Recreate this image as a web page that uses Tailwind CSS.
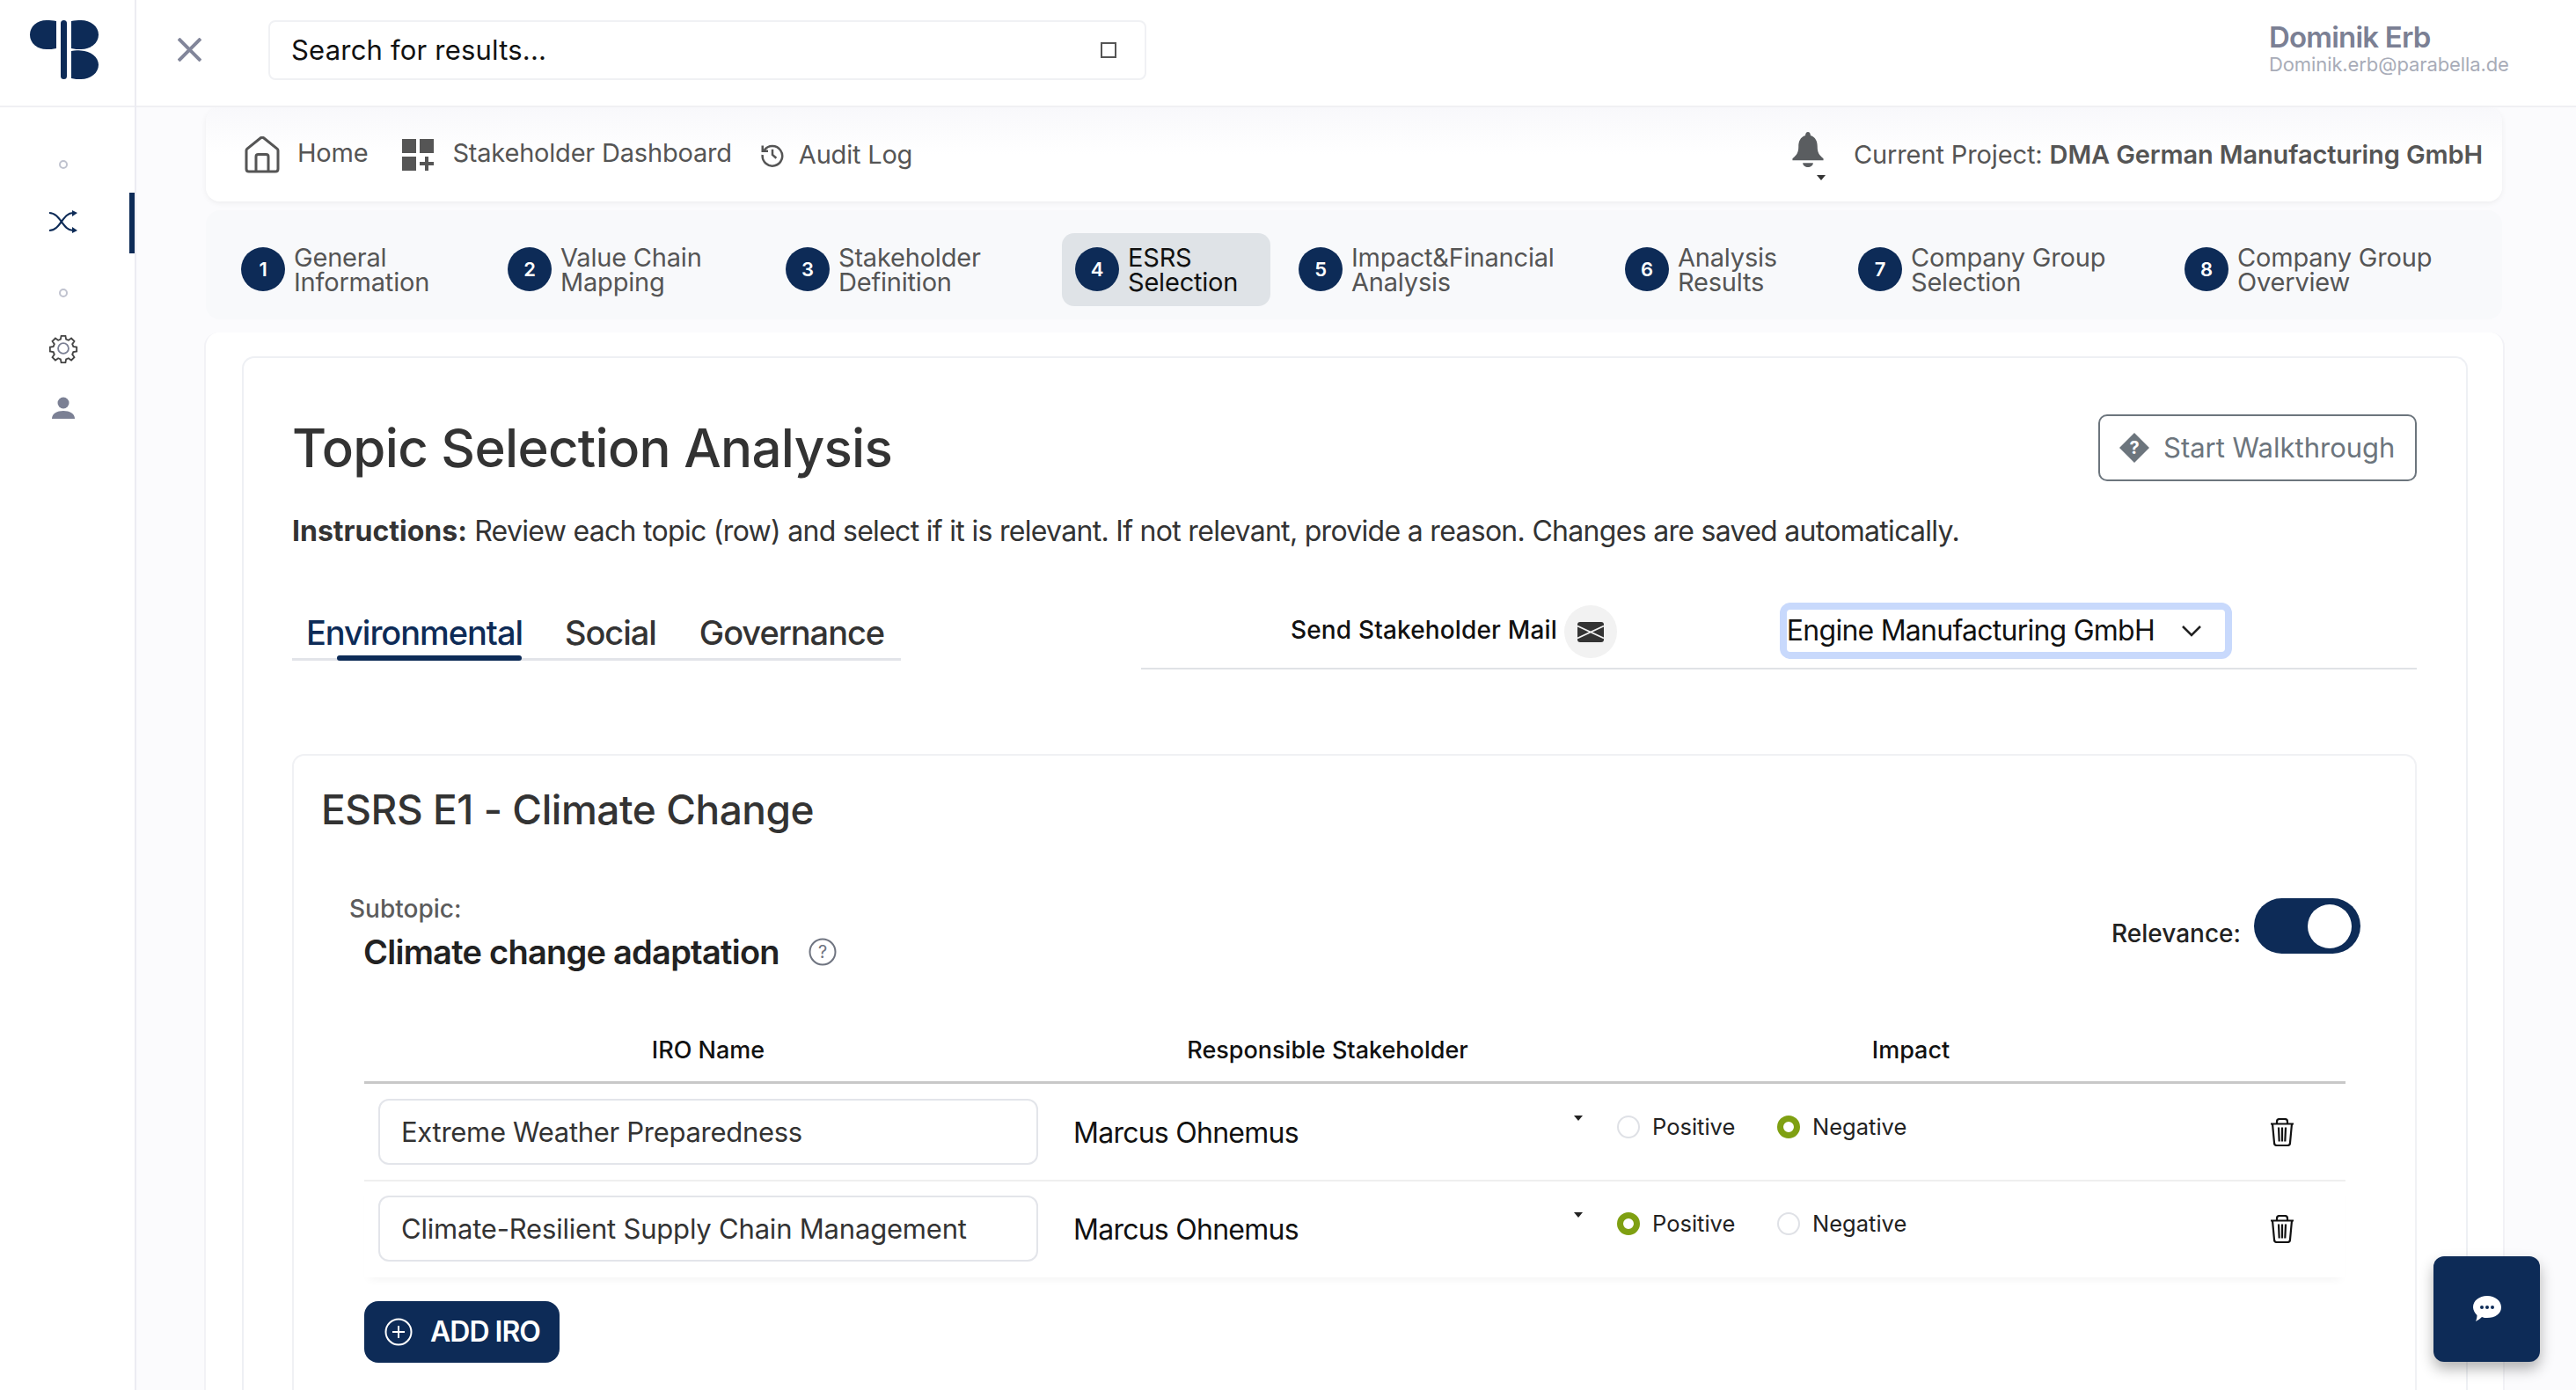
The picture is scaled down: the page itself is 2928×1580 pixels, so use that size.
<!DOCTYPE html>
<html lang="en">
<head>
    <meta charset="UTF-8">
    <title>Topic Selection Analysis</title>
    <script src="https://cdn.jsdelivr.net/npm/@tailwindcss/browser@4"></script>
</head>
<body class="font-['Inter',sans-serif] h-[1580px] overflow-hidden flex bg-[#fbfbfd] text-[#333]">
    <!-- Sidebar -->
    <aside class="w-[155px] shrink-0 h-full bg-white border-r-2 border-[#ececf2] flex flex-col items-center pr-[10px]">
        <div class="w-[153px] -mr-[10px] self-start h-[122px] border-b-2 border-[#f0f0f3] pt-[23px] pl-[33px]">
            <svg width="80" height="68" viewBox="0 0 80 68" fill="#0d2b57">
                <path d="M31 1C27 0 24 0 20 0C9 0 1 7 1 16.500C1 26 9 33 20 33C24 33 27 33 31 32Z"/>
                <rect x="36" y="0" width="7" height="67" rx="3.500"/>
                <path d="M48 1C52 0 55 0 59 0C70 0 79 7 79 16.500C79 26 70 33 59 33C55 33 52 33 48 32Z"/>
                <path d="M48 35C52 34 55 34 59 34.500C70 35 79 42 79 50.500C79 60 70 67 59 67C55 67 52 67 48 66Z"/>
            </svg>
        </div>
        <div class="mt-[60px] w-[10px] h-[10px] rounded-full border-2 border-[#c0c3cf]"></div>
        <div class="relative w-full flex justify-center mt-[42px] h-[36px] items-center">
            <svg width="34" height="26" viewBox="0 0 34 26" fill="none" stroke="#0d2b57" stroke-width="2.200">
                <path d="M1 3C14 3 16 23 28 23M1 23C14 23 16 3 28 3"/>
                <path d="M27 0L33 3L27 7Z M27 19L33 23L27 26Z" fill="#0d2b57" stroke="none"/>
            </svg>
            <div class="absolute right-[-10px] top-[-15px] w-[6px] h-[69px] bg-[#0d2b57]"></div>
        </div>
        <div class="mt-[58px] w-[10px] h-[10px] rounded-full border-2 border-[#c0c3cf]"></div>
        <svg class="mt-[41px]" width="34" height="34" viewBox="0 0 24 24" fill="none" stroke="#444" stroke-width="1.300">
            <path d="M10.300 2h3.400l.5 2.700 1.900.8 2.300-1.600 2.400 2.400-1.600 2.300.8 1.900 2.700.5v3.400l-2.700.5-.8 1.900 1.600 2.300-2.400 2.400-2.300-1.600-1.900.8-.5 2.700h-3.400l-.5-2.700-1.900-.8-2.300 1.600-2.400-2.400 1.600-2.300-.8-1.900-2.700-.5v-3.400l2.700-.5.8-1.900-1.600-2.300 2.400-2.400 2.300 1.600 1.900-.8z"/>
            <circle cx="12" cy="12" r="4.200" stroke="#7b8094"/>
        </svg>
        <svg class="mt-[38px]" width="26" height="26" viewBox="0 0 26 26" fill="#7b8094">
            <circle cx="13" cy="7" r="6.500"/>
            <path d="M0 25C0 19 6 16 13 16S26 19 26 25Z"/>
        </svg>
    </aside>

    <div class="flex-1 min-w-0 flex flex-col">
        <!-- Top bar -->
        <header class="h-[122px] shrink-0 bg-white border-b-2 border-[#f0f0f3] flex items-start pt-[23px]">
            <svg class="ml-[47px] mt-[20px]" width="27" height="27" viewBox="0 0 27 27" fill="none" stroke="#82869a" stroke-width="4">
                <path d="M1 1L26 26M26 1L1 26"/>
            </svg>
            <div class="ml-[76px] w-[998px] h-[68px] rounded-[8px] border-2 border-[#f0f1f4] flex items-center justify-between pl-[24px] pr-[32px]">
                <span class="text-[31px] text-[#111] tracking-[0.2px]">Search for results...</span>
                <div class="w-[18px] h-[18px] border-2 border-[#555]"></div>
            </div>
            <div class="ml-auto mr-[75px] mt-[1px] w-[274px]">
                <div class="text-[33px] leading-[36px] font-semibold text-[#7b8094] tracking-[-0.8px]">Dominik Erb</div>
                <div class="text-[22px] leading-[26px] text-[#a8acb8] tracking-[-0.1px] whitespace-nowrap">Dominik.erb@parabella.de</div>
            </div>
        </header>

        <main class="flex-1 min-h-0 pl-[79px] flex flex-col overflow-hidden">
            <!-- Nav -->
            <nav class="w-[2610px] h-[107px] shrink-0 bg-linear-to-b from-[#f8f8fb] via-white to-white rounded-[16px] shadow-[0_2px_6px_rgba(0,0,0,0.06)] flex items-center pl-[44px] pr-[22px] text-[29px] text-[#555] tracking-[-0.2px]">
                <svg width="40" height="42" viewBox="0 0 40 42" fill="none" stroke="#555" stroke-width="3">
                    <path d="M2 16Q2 15 3 14L18 2Q20 .5 22 2L37 14Q38 15 38 16V37Q38 40 35 40H5Q2 40 2 37Z"/>
                    <path d="M13 40V23Q13 20.500 15.500 20.500H24.500Q27 20.500 27 23V40"/>
                </svg>
                <span class="ml-[20px] mb-[4px]">Home</span>
                <svg class="ml-[39px]" width="36" height="36" viewBox="0 0 36 36" fill="#555">
                    <rect x="0" y="0" width="16" height="16"/>
                    <rect x="20" y="0" width="16" height="16"/>
                    <rect x="0" y="20" width="16" height="16"/>
                    <path d="M26 20H30V26H36V30H30V36H26V30H20V26H26Z"/>
                </svg>
                <span class="ml-[21px] mb-[4px]">Stakeholder Dashboard</span>
                <svg class="ml-[31px]" width="30" height="30" viewBox="0 0 24 24" fill="none" stroke="#555" stroke-width="2">
                    <path d="M4.500 8A9 9 0 1 1 3 12"/>
                    <path d="M3 3.500V8.500H8" />
                    <path d="M12 7V12L15.500 15"/>
                </svg>
                <span class="ml-[15px]">Audit Log</span>
                <div class="ml-auto relative mr-[34px] mb-[10px]">
                    <svg width="36" height="41" viewBox="0 0 36 42" fill="#5a5d60">
                        <path d="M18 0C20 0 21 2 21 4C27 6 29 11 29 17C29 24 31 27 36 31V33H0V31C5 27 7 24 7 17C7 11 9 6 15 4C15 2 16 0 18 0Z"/>
                        <path d="M12 36H24C24 39 21 41 18 41C15 41 12 39 12 36Z"/>
                    </svg>
                    <div class="absolute left-[28px] top-[49px] w-0 h-0 border-x-[5px] border-x-transparent border-t-[6px] border-t-[#333]"></div>
                </div>
                <span class="tracking-[-0.12px]">Current Project: <b class="font-semibold">DMA German Manufacturing GmbH</b></span>
            </nav>

            <!-- Stepper -->
            <div class="w-[2610px] h-[124px] shrink-0 mt-[10px] bg-[#f8f9fb] rounded-[16px] grid grid-cols-[303px_316px_329px_254px_371px_265px_371px_1fr] items-center pl-[40px] pt-[10px] text-[29px] leading-[28px] text-[#555] tracking-[-0.2px]">
                <div class="flex items-center gap-[10px]"><span class="w-[50px] h-[50px] rounded-full bg-[#0d2b57] text-white text-[22px] font-semibold flex items-center justify-center">1</span><span class="mt-[2px]">General<br>Information</span></div>
                <div class="flex items-center gap-[10px]"><span class="w-[50px] h-[50px] rounded-full bg-[#0d2b57] text-white text-[22px] font-semibold flex items-center justify-center">2</span><span class="mt-[2px]">Value Chain<br>Mapping</span></div>
                <div class="flex items-center gap-[10px]"><span class="w-[50px] h-[50px] rounded-full bg-[#0d2b57] text-white text-[22px] font-semibold flex items-center justify-center">3</span><span class="mt-[2px]">Stakeholder<br>Definition</span></div>
                <div class="flex items-center gap-[10px] -ml-[15px] w-[237px] h-[83px] pl-[15px] rounded-[14px] bg-[#dfe3e7] text-[#111]"><span class="w-[50px] h-[50px] rounded-full bg-[#0d2b57] text-white text-[22px] font-semibold flex items-center justify-center">4</span><span class="mt-[2px]">ESRS<br>Selection</span></div>
                <div class="flex items-center gap-[10px]"><span class="w-[50px] h-[50px] rounded-full bg-[#0d2b57] text-white text-[22px] font-semibold flex items-center justify-center">5</span><span class="mt-[2px]">Impact&amp;Financial<br>Analysis</span></div>
                <div class="flex items-center gap-[10px]"><span class="w-[50px] h-[50px] rounded-full bg-[#0d2b57] text-white text-[22px] font-semibold flex items-center justify-center">6</span><span class="mt-[2px]">Analysis<br>Results</span></div>
                <div class="flex items-center gap-[10px]"><span class="w-[50px] h-[50px] rounded-full bg-[#0d2b57] text-white text-[22px] font-semibold flex items-center justify-center">7</span><span class="mt-[2px]">Company Group<br>Selection</span></div>
                <div class="flex items-center gap-[10px]"><span class="w-[50px] h-[50px] rounded-full bg-[#0d2b57] text-white text-[22px] font-semibold flex items-center justify-center">8</span><span class="mt-[2px]">Company Group<br>Overview</span></div>
            </div>

            <!-- Outer card -->
            <div class="-ml-[2px] w-[2615px] flex-1 min-h-0 mt-[15px] border-x-2 border-[#f2f2f6] bg-white rounded-t-[16px] pt-[27px] pl-[41px] pr-[40px] flex flex-col">
                <section class="flex-1 min-h-0 border-2 border-b-0 border-[#eef0f4] rounded-t-[14px] pl-[55px] pr-[56px] pt-[64px] flex flex-col">
                    <div class="flex justify-between items-center">
                        <h1 class="text-[60px] leading-[76px] font-medium text-[#333] tracking-[-0.7px]">Topic Selection Analysis</h1>
                        <button class="w-[362px] h-[76px] border-2 border-[#6c757d] rounded-[10px] flex items-center pl-[22px] gap-[16px] text-[#6c757d] text-[31px]">
                            <svg width="34" height="34" viewBox="0 0 34 34" fill="#6c757d">
                                <path d="M17 0L34 17L17 34L0 17Z"/>
                                <text x="17" y="24" text-anchor="middle" font-size="20" font-weight="700" fill="#fff">?</text>
                            </svg>
                            Start Walkthrough
                        </button>
                    </div>
                    <p class="mt-[37px] text-[32px] leading-[40px] text-[#333] tracking-[-0.7px]"><b class="font-bold tracking-normal">Instructions:</b> Review each topic (row) and select if it is relevant. If not relevant, provide a reason. Changes are saved automatically.</p>

                    <div class="mt-[61px] flex justify-between items-start">
                        <div class="relative w-[692px] h-[66px] border-b-[3px] border-[#e2e4e9] flex pl-[16px] text-[38px] leading-[68px] text-[#333] font-medium tracking-[-1.050px]">
                            <span class="text-[#0d2b57]">Environmental</span>
                            <span class="ml-[48px]">Social</span>
                            <span class="ml-[49px]">Governance</span>
                            <div class="absolute left-[51px] bottom-[-3px] w-[210px] h-[6px] rounded-[3px] bg-[#0d2b57]"></div>
                        </div>
                        <div class="w-[1450px] h-[76px] border-b-2 border-[#e0e2e6] flex items-start pl-[170px]">
                            <span class="text-[28px] leading-[62px] font-medium text-[#111] whitespace-nowrap tracking-[0.15px]">Send Stakeholder Mail</span>
                            <div class="ml-[8px] mt-[3px] w-[60px] h-[60px] rounded-full bg-[#f2f2f2] flex items-center justify-center">
                                <svg width="30" height="23" viewBox="0 0 30 23"><rect width="30" height="23" rx="3" fill="#333"/><path d="M0 4.500L30 18.500M30 4.500L0 18.500" fill="none" stroke="#f2f2f2" stroke-width="1.600"/></svg>
                            </div>
                            <div class="ml-[185px] w-[514px] h-[64px] rounded-[12px] border-[8px] border-[#c8d9fc] flex items-center justify-between pr-[26px] text-[32px] text-[#111] tracking-[-0.75px] whitespace-nowrap">
                                <span>Engine Manufacturing GmbH</span>
                                <svg width="24" height="14" viewBox="0 0 24 14" fill="none" stroke="#222" stroke-width="2.500"><path d="M2 2L12 12L22 2"/></svg>
                            </div>
                        </div>
                    </div>

                    <div class="mt-[96px] flex-1 min-h-0 border-2 border-b-0 border-[#f0f1f4] rounded-t-[14px] pt-[31px] pl-[31px]">
                        <h2 class="text-[46px] leading-[60px] font-medium text-[#333] tracking-[-0.45px]">ESRS E1 - Climate Change</h2>
                        <div class="mt-[65px] ml-[32px] flex justify-between pr-[62px]">
                            <div>
                                <div class="text-[28px] leading-[36px] font-medium text-[#5c5c5c]">Subtopic:</div>
                                <div class="ml-[16px] mt-[7px] flex items-center h-[48px]">
                                    <span class="text-[38px] font-semibold text-[#222] tracking-[-0.75px]">Climate change adaptation</span>
                                    <svg class="ml-[33px]" width="32" height="32" viewBox="0 0 32 32" fill="none" stroke="#6f7480" stroke-width="2"><circle cx="16" cy="16" r="14.500"/><text x="16" y="23" text-anchor="middle" font-size="20" stroke="none" fill="#6f7480">?</text></svg>
                                </div>
                            </div>
                            <div class="flex items-start mt-[6px]">
                                <span class="text-[28px] leading-[40px] mt-[20px] font-medium text-[#222]">Relevance:</span>
                                <div class="ml-[15px] w-[121px] h-[63px] rounded-full bg-[#0d2b57] relative">
                                    <div class="absolute right-[10px] top-[7px] w-[50px] h-[50px] rounded-full bg-white"></div>
                                </div>
                            </div>
                        </div>

                        <!-- IRO table -->
                        <div class="mt-[70px] ml-[49px] w-[2252px]">
                            <div class="grid grid-cols-[782px_626px_700px_144px] h-[56px] border-b-[3px] border-[#c8c8c8] text-[27px] leading-[36px] font-medium text-[#111] text-center">
                                <div>IRO Name</div>
                                <div>Responsible Stakeholder</div>
                                <div>Impact</div>
                                <div></div>
                            </div>
                            <div class="grid grid-cols-[782px_626px_700px_144px] items-start pt-[17px] pb-[17px] border-b-2 border-[#efefef]">
                                <div class="pl-[16px]"><div class="w-[750px] h-[75px] border-2 border-[#e3e5ea] rounded-[12px] flex items-center pl-[24px] pt-[2px] text-[31px] text-[#333] tracking-[-0.3px]">Extreme Weather Preparedness</div></div>
                                <div class="relative pl-[24px] pt-[2px] h-[75px] flex items-center text-[32px] text-[#111] tracking-[-0.75px]">Marcus Ohnemus<div class="absolute left-[593px] top-[19px] w-0 h-0 border-x-[5px] border-x-transparent border-t-[6px] border-t-[#222]"></div></div>
                                <div class="flex items-center h-[64px] pl-[16px] text-[25.500px] text-[#222]">
                                    <span class="w-[26px] h-[26px] rounded-full border-2 border-[#dfe1e6]"></span><span class="ml-[14px] w-[142px]">Positive</span>
                                    <span class="w-[26px] h-[26px] rounded-full border-[7px] border-[#7fa012] bg-white"></span><span class="ml-[14px]">Negative</span>
                                </div>
                                <div class="flex justify-center h-[75px] items-center">
                                    <svg width="28" height="32" viewBox="0 0 28 32" fill="none" stroke="#111" stroke-width="2.200"><path d="M1 6.500H27M8 6.500V4Q8 1 11 1H17Q20 1 20 4V6.500M3 6.500L5 28Q5 31 8 31H20Q23 31 23 28L25 6.500M10 10.500L10.700 26.500M14 10.500V26.500M18 10.500L17.300 26.500"/></svg>
                                </div>
                            </div>
                            <div class="grid grid-cols-[782px_626px_700px_144px] items-start pt-[16px] pb-[18px] shadow-[0_8px_10px_-6px_rgba(0,0,0,0.05)]">
                                <div class="pl-[16px]"><div class="w-[750px] h-[75px] border-2 border-[#e3e5ea] rounded-[12px] flex items-center pl-[24px] pt-[2px] text-[31px] text-[#333] tracking-[-0.2px] whitespace-nowrap">Climate-Resilient Supply Chain Management</div></div>
                                <div class="relative pl-[24px] pt-[2px] h-[75px] flex items-center text-[32px] text-[#111] tracking-[-0.75px]">Marcus Ohnemus<div class="absolute left-[593px] top-[19px] w-0 h-0 border-x-[5px] border-x-transparent border-t-[6px] border-t-[#222]"></div></div>
                                <div class="flex items-center h-[64px] pl-[16px] text-[25.500px] text-[#222]">
                                    <span class="w-[26px] h-[26px] rounded-full border-[7px] border-[#7fa012] bg-white"></span><span class="ml-[14px] w-[142px]">Positive</span>
                                    <span class="w-[26px] h-[26px] rounded-full border-2 border-[#dfe1e6]"></span><span class="ml-[14px]">Negative</span>
                                </div>
                                <div class="flex justify-center h-[75px] items-center">
                                    <svg width="28" height="32" viewBox="0 0 28 32" fill="none" stroke="#111" stroke-width="2.200"><path d="M1 6.500H27M8 6.500V4Q8 1 11 1H17Q20 1 20 4V6.500M3 6.500L5 28Q5 31 8 31H20Q23 31 23 28L25 6.500M10 10.500L10.700 26.500M14 10.500V26.500M18 10.500L17.300 26.500"/></svg>
                                </div>
                            </div>
                            <button class="mt-[27px] w-[222px] h-[70px] rounded-[16px] bg-[#0d2b57] text-white flex items-center pl-[23px] text-[32px] font-semibold tracking-[-1px]">
                                <svg width="32" height="32" viewBox="0 0 32 32" fill="none" stroke="#fff" stroke-width="2"><circle cx="16" cy="16" r="14.500"/><path d="M16 9V23M9 16H23"/></svg>
                                <span class="ml-[20px]">ADD IRO</span>
                            </button>
                        </div>
                    </div>
                </section>
            </div>
        </main>
    </div>

    <!-- Chat button -->
    <button class="fixed right-[41px] bottom-[32px] w-[121px] h-[120px] rounded-[12px] bg-[#0d2b57] shadow-[0_8px_16px_rgba(0,0,0,0.3)] flex items-center justify-center">
        <svg width="32" height="30" viewBox="0 0 32 30"><path d="M16 0C25 0 32 5.500 32 13C32 20.500 25 25 16 25C14 25 12 25 10 24C8 26 5 28 3 29C4 27 4.500 24 4.500 22C2 19.500 0 16 0 13C0 5.500 7 0 16 0Z" fill="#fff"/><circle cx="10" cy="13" r="2" fill="#0d2b57"/><circle cx="16" cy="13" r="2" fill="#0d2b57"/><circle cx="22" cy="13" r="2" fill="#0d2b57"/></svg>
    </button>
</body>
</html>
